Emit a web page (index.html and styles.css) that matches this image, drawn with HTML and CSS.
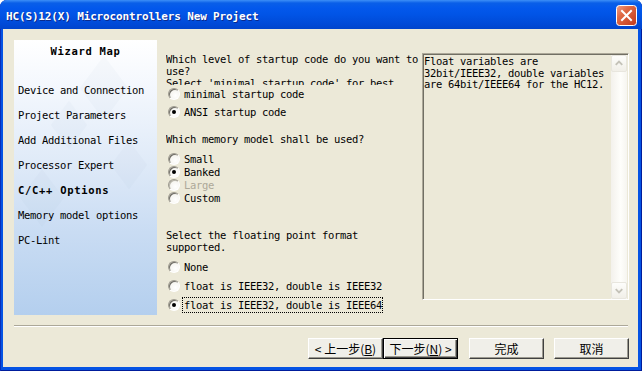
FILE: index.html
```html
<!DOCTYPE html>
<html>
  <head>
    <title>HC(S)12(X) Microcontrollers New Project</title>
    <link rel="stylesheet" href="styles.css">
  </head>
  <body>
    <div class="window">
      <div class="titlebar">
        <span class="title">HC(S)12(X) Microcontrollers New Project</span>
        <span class="close-btn">
          <svg width="21" height="21" viewBox="0 0 21 21">
            <defs>
              <linearGradient id="closeFill" x1="0" y1="0" x2="1" y2="1">
                <stop offset="0" stop-color="#f0a088"/>
                <stop offset="0.35" stop-color="#e06a45"/>
                <stop offset="1" stop-color="#c2381b"/>
              </linearGradient>
            </defs>
            <rect x="0.5" y="0.5" width="20" height="20" rx="3" fill="url(#closeFill)" stroke="#fff"/>
            <path d="M6 6 L15 15 M15 6 L6 15" stroke="#fff" stroke-width="2" stroke-linecap="square"/>
          </svg>
        </span>
      </div>

      <div class="dialog">
        <div class="content">
          <div class="wizard-map">
            <div class="diamond d1"></div>
            <div class="diamond d2"></div>
            <div class="diamond d3"></div>
            <div class="diamond d4"></div>
            <div class="map-title">Wizard Map</div>
            <ul class="map-list">
              <li>Device and Connection</li>
              <li>Project Parameters</li>
              <li>Add Additional Files</li>
              <li>Processor Expert</li>
              <li class="current">C/C++ Options</li>
              <li>Memory model options</li>
              <li>PC-Lint</li>
            </ul>
          </div>

          <div class="options">
            <div class="question q-startup">Which level of startup code do you want to<br>use?<br>Select 'minimal startup code' for best</div>
            <div class="choice tall"><span class="radio"></span><span class="choice-label">minimal startup code</span></div>
            <div class="choice tall"><span class="radio checked"></span><span class="choice-label">ANSI startup code</span></div>

            <div class="question q-memory">Which memory model shall be used?</div>
            <div class="group-memory">
              <div class="choice"><span class="radio"></span><span class="choice-label">Small</span></div>
              <div class="choice"><span class="radio checked"></span><span class="choice-label">Banked</span></div>
              <div class="choice disabled"><span class="radio"></span><span class="choice-label">Large</span></div>
              <div class="choice"><span class="radio"></span><span class="choice-label">Custom</span></div>
            </div>

            <div class="question q-float">Select the floating point format<br>supported.<br>Select 'None' if no floating point is used.</div>
            <div class="group-float">
              <div class="choice wide"><span class="radio"></span><span class="choice-label">None</span></div>
              <div class="choice wide"><span class="radio"></span><span class="choice-label">float is IEEE32, double is IEEE32</span></div>
              <div class="choice wide"><span class="radio checked"></span><span class="choice-label focused">float is IEEE32, double is IEEE64</span></div>
            </div>
          </div>

          <div class="info-box">
            <div class="info-text">Float variables are<br>32bit/IEEE32, double variables<br>are 64bit/IEEE64 for the HC12.</div>
            <div class="scrollbar">
              <span class="scroll-btn">
                <svg width="15" height="15" viewBox="0 0 15 15"><path d="M4 9 L7.5 5.5 L11 9" fill="none" stroke="#c4c2b8" stroke-width="2"/></svg>
              </span>
              <span class="scroll-track"></span>
              <span class="scroll-btn">
                <svg width="15" height="15" viewBox="0 0 15 15"><path d="M4 6 L7.5 9.5 L11 6" fill="none" stroke="#c4c2b8" stroke-width="2"/></svg>
              </span>
            </div>
          </div>
        </div>

        <div class="separator"></div>

        <div class="buttons">
          <button class="btn">&lt; 上一步(<u>B</u>)</button>
          <button class="btn default">下一步(<u>N</u>) &gt;</button>
          <button class="btn gap-left">完成</button>
          <button class="btn gap-left2">取消</button>
        </div>
      </div>
    </div>
  </body>
</html>
```

FILE: styles.css
```css
body {
  margin: 0;
  background: #ffffff;
}

.window {
  width: 642px;
  height: 371px;
  display: flex;
  flex-direction: column;
  background: #0553e4;
  border-radius: 7px 7px 0 0;
  overflow: hidden;
  box-shadow: inset 1px 0 0 #0a2fb8, inset -1px 0 0 #001d9c, inset 0 -1px 0 #001d9c;
}

/* title bar */
.titlebar {
  height: 29px;
  flex: none;
  display: flex;
  align-items: center;
  justify-content: space-between;
  padding: 0 5px 0 6px;
  background: linear-gradient(to bottom, #3d8ff7 0, #0a5fe8 3px, #0358ec 8px, #0154e6 50%, #0049d6 85%, #0044cc 100%);
}

.title {
  font-family: "DejaVu Sans Mono", "Liberation Mono", monospace;
  font-weight: bold;
  font-size: 11px;
  letter-spacing: -0.15px;
  color: #ffffff;
  text-shadow: 1px 1px 0 #0c2a8c;
  margin-top: 3px;
}

.close-btn {
  width: 21px;
  height: 21px;
  margin-top: 1px;
}

.close-btn svg {
  display: block;
}

/* dialog body */
.dialog {
  flex: 1;
  margin: 0 4px 4px 3px;
  background: #ece9d8;
  padding: 11px 9px 0 11px;
  display: flex;
  flex-direction: column;
  font-family: "DejaVu Sans Mono", "Liberation Mono", monospace;
  font-size: 10.5px;
  letter-spacing: -0.32px;
  color: #000000;
}

.content {
  height: 275px;
  display: flex;
}

/* wizard map */
.wizard-map {
  position: relative;
  width: 143px;
  flex: none;
  overflow: hidden;
  background: linear-gradient(to bottom, #ffffff 0%, #f3f7fd 18%, #dfeaf8 45%, #c9dcf3 70%, #b4cfee 100%);
  padding-top: 5px;
  box-sizing: border-box;
}

.diamond {
  position: absolute;
  width: 40px;
  height: 40px;
  transform: rotate(45deg) skew(8deg, 8deg);
  background: #7f8ea8;
  opacity: 0.04;
}

.d1 { left: 70px; top: 28px; }
.d2 { left: 40px; top: 70px; width: 30px; height: 30px; }
.d3 { left: 100px; top: 110px; width: 30px; height: 30px; }
.d4 { left: 10px; top: 140px; width: 36px; height: 36px; }

.map-title {
  position: relative;
  text-align: center;
  font-weight: bold;
  letter-spacing: 0.7px;
  line-height: 12px;
}

.map-list {
  position: relative;
  list-style: none;
  margin: 21px 0 0 0;
  padding: 0 0 0 4px;
}

.map-list li {
  line-height: 25px;
  height: 25px;
  white-space: nowrap;
}

.map-list .current {
  font-weight: bold;
  letter-spacing: 0.7px;
}

/* options column */
.options {
  width: 256px;
  flex: none;
  margin-left: 9px;
  padding-top: 13px;
  line-height: 12px;
}

.question {
  white-space: nowrap;
  overflow: hidden;
}

.q-startup {
  height: 32px;
}

.q-memory {
  height: 12px;
  margin-top: 12px;
}

.group-memory {
  margin-top: 7px;
}

.q-float {
  height: 26px;
  margin-top: 25px;
}

.group-float {
  margin-top: 2px;
}

.choice {
  display: flex;
  align-items: center;
  height: 13px;
  white-space: nowrap;
}

.choice.tall {
  height: 18px;
}

.choice.wide {
  height: 19px;
}

.radio {
  position: relative;
  flex: none;
  width: 12px;
  height: 12px;
  box-sizing: border-box;
  margin-left: 2px;
  border-radius: 50%;
  border: 1px solid;
  border-color: #9d9a8f #ffffff #ffffff #9d9a8f;
  background: radial-gradient(circle at 65% 65%, #ffffff 0, #f6f5f0 60%, #dcdad0 100%);
  box-shadow: inset 1px 1px 0 #6e6c65;
}

.radio.checked::after {
  content: "";
  position: absolute;
  left: 3px;
  top: 3px;
  width: 4px;
  height: 4px;
  border-radius: 50%;
  background: #000000;
}

.choice-label {
  margin-left: 4px;
}

.choice.disabled .choice-label {
  color: #aca899;
}

.choice.disabled .radio {
  box-shadow: inset 1px 1px 0 #b8b5aa;
}

.focused {
  margin-left: 3px;
  padding: 1px 0 1px 1px;
  outline: 1px dotted #000000;
}

/* info text box */
.info-box {
  margin-top: 13px;
  width: 207px;
  height: 247px;
  flex: none;
  box-sizing: border-box;
  border: 1px solid;
  border-color: #aca899 #ffffff #ffffff #aca899;
  box-shadow: inset 1px 1px 0 #716f64;
  display: flex;
}

.info-text {
  flex: 1;
  padding: 2px 0 0 1px;
  line-height: 11.5px;
  white-space: nowrap;
  overflow: hidden;
}

.scrollbar {
  width: 16px;
  flex: none;
  display: flex;
  flex-direction: column;
  margin: 1px 1px 0 0;
  background: linear-gradient(to right, #f3f1ec, #fefefb 60%, #f6f5f0);
}

.scroll-track {
  flex: 1;
}

.scroll-btn {
  height: 17px;
  box-sizing: border-box;
  border: 1px solid #e8e6de;
  border-radius: 2px;
  background: linear-gradient(to bottom, #fdfdfb, #f1efe8);
  display: flex;
  align-items: center;
  justify-content: center;
}

.scroll-btn svg {
  display: block;
}

/* bottom part */
.separator {
  margin: 10px 1px 0 0;
  height: 1px;
  background: #aca899;
  border-bottom: 1px solid #ffffff;
}

.buttons {
  display: flex;
  justify-content: flex-end;
  margin-top: 11px;
}

.btn {
  width: 75px;
  height: 21px;
  box-sizing: border-box;
  margin: 0;
  padding: 0;
  font-family: "Noto Sans CJK SC", sans-serif;
  font-size: 12px;
  letter-spacing: 0;
  line-height: 18px;
  color: #000000;
  background: #f0efe9;
  border: 1px solid;
  border-color: #ffffff #404040 #404040 #ffffff;
  box-shadow: inset -1px -1px 0 #9c9a90;
}

.btn.default {
  border-color: #000000;
  box-shadow: inset 1px 1px 0 #ffffff, inset -1px -1px 0 #404040, inset -2px -2px 0 #9c9a90;
}

.btn.gap-left {
  margin-left: 11px;
}

.btn.gap-left2 {
  margin-left: 10px;
}
```
